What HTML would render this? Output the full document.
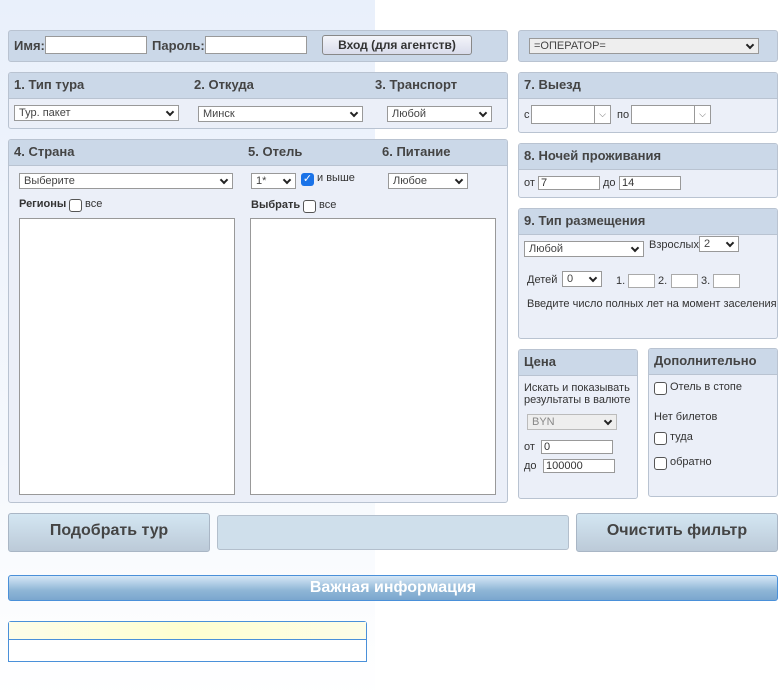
<!DOCTYPE html>
<html><head><meta charset="utf-8"><style>
*{box-sizing:border-box;margin:0;padding:0}
body{width:784px;height:700px;position:relative;overflow:hidden;font-family:"Liberation Sans",sans-serif;font-size:11px;color:#333;background:#fff}
.bg{position:absolute;left:0;top:0;width:375px;height:700px;background:linear-gradient(#e9f0fb,#f6f9fd 70%,#fff)}
.a{position:absolute}
.p{position:absolute;background:#ebeff8;border:1px solid #b9c3d1;border-radius:3px;overflow:hidden}
.h{position:absolute;left:0;right:0;top:0;height:26px;background:#cbd8e8;border-bottom:1px solid #b9c3d1}
.t{position:absolute;font-weight:bold;font-size:13px;color:#444}
.sel{position:absolute;height:16px;border:1px solid #999;background:#fff;font-size:11px;color:#444;padding-left:4px;line-height:15px}
.sel:after{content:"";position:absolute;right:5px;top:3px;width:4px;height:4px;border-right:2px solid #222;border-bottom:2px solid #222;transform:rotate(45deg)}
.in{position:absolute;height:16px;border:1px solid #999;background:#fff;font-size:11px;line-height:14px;padding-left:2px}
.cb{position:absolute;width:13px;height:13px;border:1px solid #555;border-radius:3px;background:#fff}
.btn{position:absolute;border:1px solid #a9b6c5;border-radius:3px;background:linear-gradient(#d3e6f2,#bccad8);font-weight:bold;font-size:16px;color:#444;text-align:center}
</style></head><body>
<div class="bg"></div>

<div class="p" style="left:8px;top:30px;width:500px;height:32px;background:#cbd8e8"></div>
<div class="t" style="left:14px;top:38px">Имя:</div>
<div class="in" style="left:45px;top:36px;width:102px;height:18px"></div>
<div class="t" style="left:152px;top:38px">Пароль:</div>
<div class="in" style="left:205px;top:36px;width:102px;height:18px"></div>
<div class="a" style="left:322px;top:35px;width:150px;height:20px;border:1px solid #888;border-radius:3px;background:linear-gradient(#f4f5fa,#d9dceb);font-weight:bold;font-size:12px;text-align:center;line-height:18px;color:#333">Вход (для агентств)</div>

<div class="p" style="left:518px;top:30px;width:260px;height:32px;background:#cbd8e8"></div>
<div class="sel" style="left:529px;top:38px;width:230px;background:#eee">=ОПЕРАТОР=</div>

<div class="p" style="left:8px;top:72px;width:500px;height:57px"><div class="h"></div></div>
<div class="t" style="left:14px;top:77px">1. Тип тура</div>
<div class="t" style="left:194px;top:77px">2. Откуда</div>
<div class="t" style="left:375px;top:77px">3. Транспорт</div>
<div class="sel" style="left:14px;top:105px;width:165px">Тур. пакет</div>
<div class="sel" style="left:198px;top:106px;width:165px">Минск</div>
<div class="sel" style="left:387px;top:106px;width:105px">Любой</div>

<div class="p" style="left:8px;top:139px;width:500px;height:364px"><div class="h"></div></div>
<div class="t" style="left:14px;top:144px">4. Страна</div>
<div class="t" style="left:248px;top:144px">5. Отель</div>
<div class="t" style="left:382px;top:144px">6. Питание</div>
<div class="sel" style="left:19px;top:173px;width:214px">Выберите</div>
<div class="sel" style="left:251px;top:173px;width:45px">1*</div>
<div class="a" style="left:301px;top:173px;width:13px;height:13px;background:#1a73e8;border-radius:3px;color:#fff;font-size:11px;line-height:13px;text-align:center">✓</div>
<div class="a" style="left:317px;top:172px">и выше</div>
<div class="sel" style="left:388px;top:173px;width:80px">Любое</div>
<div class="a" style="left:19px;top:198px;font-weight:bold">Регионы</div>
<div class="cb" style="left:69px;top:199px"></div>
<div class="a" style="left:85px;top:198px">все</div>
<div class="a" style="left:251px;top:199px;font-weight:bold">Выбрать</div>
<div class="cb" style="left:303px;top:200px"></div>
<div class="a" style="left:319px;top:199px">все</div>
<div class="a" style="left:19px;top:218px;width:216px;height:277px;background:#fff;border:1px solid #999"></div>
<div class="a" style="left:250px;top:218px;width:246px;height:277px;background:#fff;border:1px solid #999"></div>

<div class="p" style="left:518px;top:72px;width:260px;height:61px"><div class="h"></div></div>
<div class="t" style="left:524px;top:77px">7. Выезд</div>
<div class="a" style="left:524px;top:109px">с</div>
<div class="in" style="left:531px;top:105px;width:80px;height:19px"></div>
<div class="a" style="left:594px;top:105px;width:17px;height:19px;border:1px solid #999;font-size:9px;text-align:center;line-height:17px;color:#666">⌵</div>
<div class="a" style="left:617px;top:109px">по</div>
<div class="in" style="left:631px;top:105px;width:80px;height:19px"></div>
<div class="a" style="left:694px;top:105px;width:17px;height:19px;border:1px solid #999;font-size:9px;text-align:center;line-height:17px;color:#666">⌵</div>

<div class="p" style="left:518px;top:143px;width:260px;height:55px"><div class="h"></div></div>
<div class="t" style="left:524px;top:148px">8. Ночей проживания</div>
<div class="a" style="left:524px;top:177px">от</div>
<div class="in" style="left:538px;top:176px;width:62px;height:14px;line-height:12px">7</div>
<div class="a" style="left:603px;top:177px">до</div>
<div class="in" style="left:619px;top:176px;width:62px;height:14px;line-height:12px">14</div>

<div class="p" style="left:518px;top:208px;width:260px;height:131px"><div class="h"></div></div>
<div class="t" style="left:524px;top:213px">9. Тип размещения</div>
<div class="sel" style="left:524px;top:241px;width:120px">Любой</div>
<div class="a" style="left:649px;top:239px">Взрослых</div>
<div class="sel" style="left:699px;top:236px;width:40px">2</div>
<div class="a" style="left:527px;top:274px">Детей</div>
<div class="sel" style="left:562px;top:271px;width:40px">0</div>
<div class="a" style="left:616px;top:275px">1.</div>
<div class="in" style="left:628px;top:274px;width:27px;height:14px;border-color:#aaa"></div>
<div class="a" style="left:658px;top:275px">2.</div>
<div class="in" style="left:671px;top:274px;width:27px;height:14px;border-color:#aaa"></div>
<div class="a" style="left:701px;top:275px">3.</div>
<div class="in" style="left:713px;top:274px;width:27px;height:14px;border-color:#aaa"></div>
<div class="a" style="left:527px;top:298px;white-space:nowrap">Введите число полных лет на момент заселения</div>

<div class="p" style="left:518px;top:349px;width:120px;height:150px"><div class="h"></div></div>
<div class="t" style="left:524px;top:354px">Цена</div>
<div class="a" style="left:524px;top:382px;line-height:12px">Искать и показывать<br>результаты в валюте</div>
<div class="sel" style="left:527px;top:414px;width:90px;background:#eee;color:#888;border-color:#bbb">BYN</div>
<div class="a" style="left:524px;top:441px">от</div>
<div class="in" style="left:541px;top:440px;width:72px;height:14px;line-height:12px">0</div>
<div class="a" style="left:524px;top:460px">до</div>
<div class="in" style="left:543px;top:459px;width:72px;height:14px;line-height:12px">100000</div>

<div class="p" style="left:648px;top:348px;width:130px;height:149px"><div class="h"></div></div>
<div class="t" style="left:654px;top:353px">Дополнительно</div>
<div class="cb" style="left:654px;top:382px"></div>
<div class="a" style="left:670px;top:381px">Отель в стопе</div>
<div class="a" style="left:654px;top:411px">Нет билетов</div>
<div class="cb" style="left:654px;top:432px"></div>
<div class="a" style="left:670px;top:431px">туда</div>
<div class="cb" style="left:654px;top:457px"></div>
<div class="a" style="left:670px;top:456px">обратно</div>

<div class="btn" style="left:8px;top:513px;width:202px;height:39px;line-height:33px">Подобрать тур</div>
<div class="a" style="left:217px;top:515px;width:352px;height:35px;border:1px solid #b3bfcc;border-radius:3px;background:#cfdfeb"></div>
<div class="btn" style="left:576px;top:513px;width:202px;height:39px;line-height:33px">Очистить фильтр</div>

<div class="a" style="left:8px;top:575px;width:770px;height:26px;border:1px solid #4a90d9;border-radius:3px;background:linear-gradient(#d6e7f6,#8fb6d6 60%,#7aa6ce);color:#fff;font-weight:bold;font-size:16px;text-align:center;line-height:24px">Важная информация</div>

<div class="a" style="left:8px;top:621px;width:359px;height:41px;border:1px solid #4a90d9;border-radius:3px 3px 0 0;background:#fff"></div>
<div class="a" style="left:9px;top:622px;width:357px;height:18px;background:linear-gradient(90deg,#fdfde8,#fefed0,#fdfde8);border-bottom:1px solid #4a90d9"></div>
</body></html>
